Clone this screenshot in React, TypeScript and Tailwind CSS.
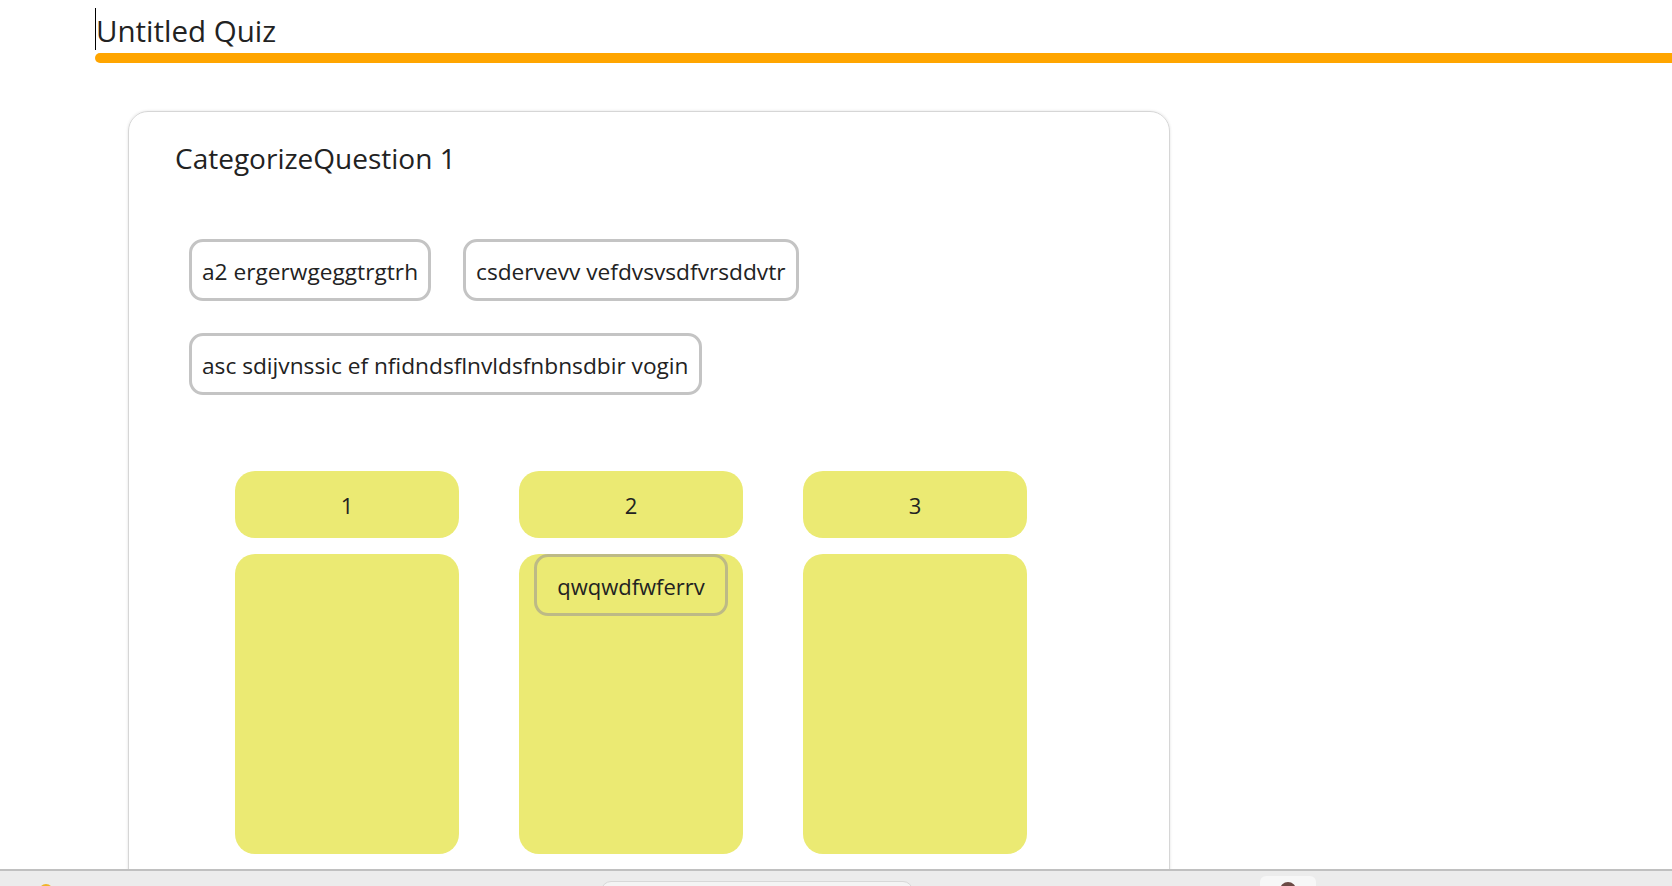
import React from "react";

const chips = ["a2 ergerwgeggtrgtrh", "csdervevv vefdvsvsdfvrsddvtr", "asc sdijvnssic ef nfidndsflnvldsfnbnsdbir vogin"];

const categories: { name: string; items: string[] }[] = [
  { name: "1", items: [] },
  { name: "2", items: ["qwqwdfwferrv"] },
  { name: "3", items: [] },
];

function Chip({ text }: { text: string }) {
  return (
    <div className="m-4 rounded-[14px] border-[3px] border-[#c4c4c4] bg-white px-[10px] pb-[11px] pt-[14px] text-[22.7px] leading-[31px] text-[#222]">
      {text}
    </div>
  );
}

function CategoryColumn({ name, items }: { name: string; items: string[] }) {
  return (
    <div className="flex w-[224px] flex-col gap-4">
      <div className="flex h-[67px] items-center justify-center rounded-[20px] bg-[#ebea73] pt-[1px] text-[22px] text-[#222]">
        {name}
      </div>
      <div className="h-[300px] rounded-[20px] bg-[#ebea73]">
        {items.map((it) => (
          <div
            key={it}
            className="mx-[15px] rounded-[14px] border-[3px] border-[#bdba86] pb-[12px] pt-[14px] text-center text-[22px] leading-[30px] text-[#222]"
          >
            {it}
          </div>
        ))}
      </div>
    </div>
  );
}

export default function App() {
  return (
    <div className="flex h-screen w-full flex-col overflow-hidden bg-white font-['Open_Sans','Noto_Sans',sans-serif]">
      <div className="min-h-0 flex-1 overflow-hidden">
        {/* quiz title */}
        <div className="pl-[95px] pt-[8px]">
          <div className="flex h-[42px] items-start">
            <span className="h-[42px] w-px bg-black" />
            <span className="mt-[2px] text-[29.5px] leading-[42px] text-[#222]">Untitled Quiz</span>
          </div>
          <div className="mt-[3px] h-[10px] w-[2000px] rounded-l-full bg-[#ffa500]" />
        </div>

        {/* question card */}
        <div className="ml-[128px] mt-[48px] w-[1042px] rounded-[20px] border border-[#d6d6d6] px-[46px] pb-[60px] pt-[24px] shadow-[0_0_3px_rgba(0,0,0,0.12)]">
          <div className="text-[28px] leading-[45px] text-[#222]">CategorizeQuestion 1</div>

          <div className="-ml-[2px] mt-[42px] flex flex-wrap">
            {chips.map((c) => (
              <Chip key={c} text={c} />
            ))}
          </div>

          <div className="ml-[60px] mt-[60px] flex gap-[60px]">
            {categories.map((c) => (
              <CategoryColumn key={c.name} name={c.name} items={c.items} />
            ))}
          </div>
        </div>
      </div>

      {/* bottom bar, mostly cut off */}
      <div className="flex h-[17px] shrink-0 items-start overflow-hidden border-t-2 border-[#c0c0c0] bg-[#ececec]">
        <span className="ml-[39px] mt-[13px] h-[14px] w-[14px] shrink-0 rounded-full bg-[#f0b429]" />
        <span className="ml-[25px] mt-[9px] shrink-0 text-[14px] font-bold text-black">IFIO</span>
        <div className="ml-[495px] mt-[10px] h-[30px] w-[312px] shrink-0 rounded-[10px] border border-[#d8d8d8] bg-[#f4f4f4]" />
        <div className="ml-[347px] mt-[5px] flex h-[30px] w-[56px] shrink-0 justify-center rounded-[6px] bg-[#f7f7f7]">
          <span className="mt-[6px] h-[20px] w-[16px] rounded-full bg-[#6b4a45]" />
        </div>
      </div>
    </div>
  );
}
